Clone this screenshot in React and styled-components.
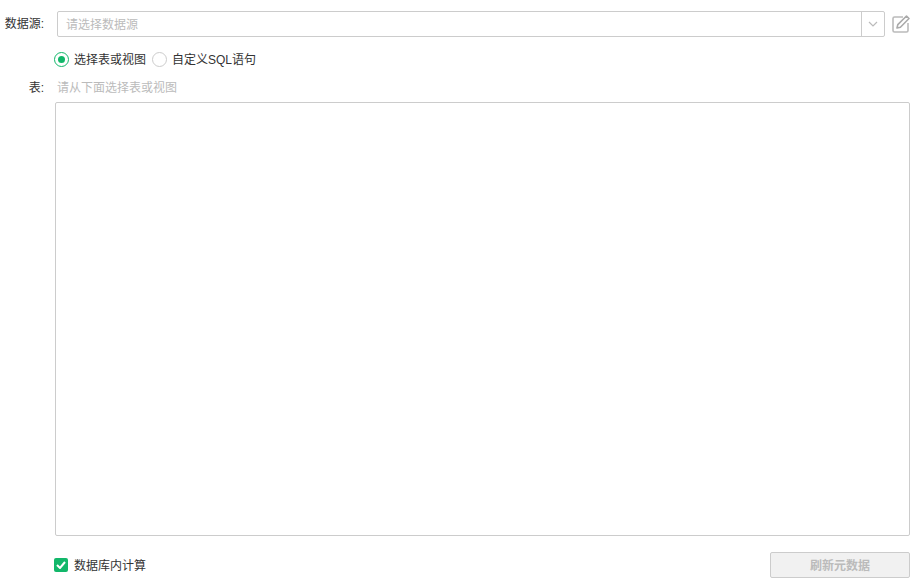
import React from 'react';
import styled, { createGlobalStyle } from 'styled-components';

const GlobalStyle = createGlobalStyle`
  html, body {
    margin: 0;
    padding: 0;
    background: #fff;
  }
  body {
    font-family: "Liberation Sans", "Noto Sans CJK SC", sans-serif;
    font-size: 12px;
    color: #333;
  }
`;

const Page = styled.div`
  width: 916px;
  height: 582px;
  box-sizing: border-box;
  padding: 11px 6px 0 0;
  display: flex;
  flex-direction: column;
`;

const Row = styled.div`
  display: flex;
  align-items: center;
`;

const Label = styled.label`
  width: 44px;
  flex: none;
  text-align: right;
  white-space: nowrap;
  line-height: 16px;
  color: #333;
  margin-top: ${({ $drop }) => ($drop ? '2px' : '0')};
`;

const Select = styled.div`
  flex: 1;
  margin-left: 13px;
  height: 26px;
  box-sizing: border-box;
  border: 1px solid #ccc;
  border-radius: 2px;
  display: flex;
  align-items: center;
`;

const SelectText = styled.span`
  flex: 1;
  padding-left: 8px;
  margin-bottom: 2px;
  color: #bbb;
`;

const Arrow = styled.span`
  width: 22px;
  height: 100%;
  border-left: 1px solid #ccc;
  display: flex;
  align-items: center;
  justify-content: center;
`;

const EditButton = styled.span`
  width: 18px;
  height: 18px;
  margin-left: 7px;
  flex: none;
  display: block;
`;

const RadioRow = styled.div`
  display: flex;
  align-items: center;
  margin: 14px 0 0 54px;
  height: 16px;
`;

const RadioItem = styled.span`
  display: flex;
  align-items: center;
  margin-right: 6px;
  color: #333;
`;

const RadioDot = styled.span`
  width: 15px;
  height: 15px;
  box-sizing: border-box;
  border-radius: 50%;
  border: 1px solid ${({ $on }) => ($on ? '#12b76a' : '#ccc')};
  margin-right: 5px;
  display: flex;
  align-items: center;
  justify-content: center;

  &::after {
    content: '';
    display: ${({ $on }) => ($on ? 'block' : 'none')};
    width: 7px;
    height: 7px;
    border-radius: 50%;
    background: #12b76a;
  }
`;

const ItemText = styled.span`
  margin-bottom: 2px;
`;

const TableRow = styled(Row)`
  margin-top: 12px;
  height: 16px;
`;

const Hint = styled.span`
  margin-left: 13px;
  margin-bottom: 2px;
  color: #bbb;
`;

const ListBox = styled.div`
  margin: 7px 0 0 55px;
  height: 434px;
  box-sizing: border-box;
  border: 1px solid #ccc;
  border-radius: 2px;
`;

const Footer = styled.div`
  display: flex;
  align-items: center;
  justify-content: space-between;
  margin: 16px 0 0 54px;
`;

const CheckItem = styled.span`
  display: flex;
  align-items: center;
  color: #333;
`;

const CheckBox = styled.span`
  width: 14px;
  height: 14px;
  border-radius: 2px;
  background: #12b76a;
  margin-right: 6px;
  display: flex;
  align-items: center;
  justify-content: center;
`;

const RefreshButton = styled.button`
  width: 140px;
  height: 26px;
  box-sizing: border-box;
  border: 1px solid #ccc;
  border-radius: 2px;
  background: #f1f1f1;
  color: #bbb;
  font: bold 12px "Liberation Sans", "Noto Sans CJK SC", sans-serif;
  padding: 0 0 2px;
`;

const App = () => (
  <>
    <GlobalStyle />
    <Page>
      <Row>
        <Label>数据源:</Label>
        <Select>
          <SelectText>请选择数据源</SelectText>
          <Arrow>
            <svg width="10" height="6" viewBox="0 0 10 6" fill="none">
              <path d="M1 1l4 4 4-4" stroke="#bbb" strokeWidth="1.2" />
            </svg>
          </Arrow>
        </Select>
        <EditButton>
          <svg width="18" height="18" viewBox="0 0 18 18" fill="none">
            <path d="M11 2H2.500A1.500 1.500 0 0 0 1 3.500v12A1.500 1.500 0 0 0 2.500 17h12a1.500 1.500 0 0 0 1.500-1.500V8" stroke="#bbb" strokeWidth="1.600" />
            <path d="M5 13l.8-3.400L14.500 1l2.500 2.500-8.600 8.700z" stroke="#aaa" strokeWidth="1.600" strokeLinejoin="round" />
          </svg>
        </EditButton>
      </Row>
      <RadioRow>
        <RadioItem>
          <RadioDot $on />
          <ItemText>选择表或视图</ItemText>
        </RadioItem>
        <RadioItem>
          <RadioDot />
          <ItemText>自定义SQL语句</ItemText>
        </RadioItem>
      </RadioRow>
      <TableRow>
        <Label $drop>表:</Label>
        <Hint>请从下面选择表或视图</Hint>
      </TableRow>
      <ListBox />
      <Footer>
        <CheckItem>
          <CheckBox>
            <svg width="10" height="8" viewBox="0 0 10 8" fill="none">
              <path d="M1 4l3 3 5-6" stroke="#fff" strokeWidth="2" />
            </svg>
          </CheckBox>
          <ItemText>数据库内计算</ItemText>
        </CheckItem>
        <RefreshButton disabled>刷新元数据</RefreshButton>
      </Footer>
    </Page>
  </>
);

export default App;
